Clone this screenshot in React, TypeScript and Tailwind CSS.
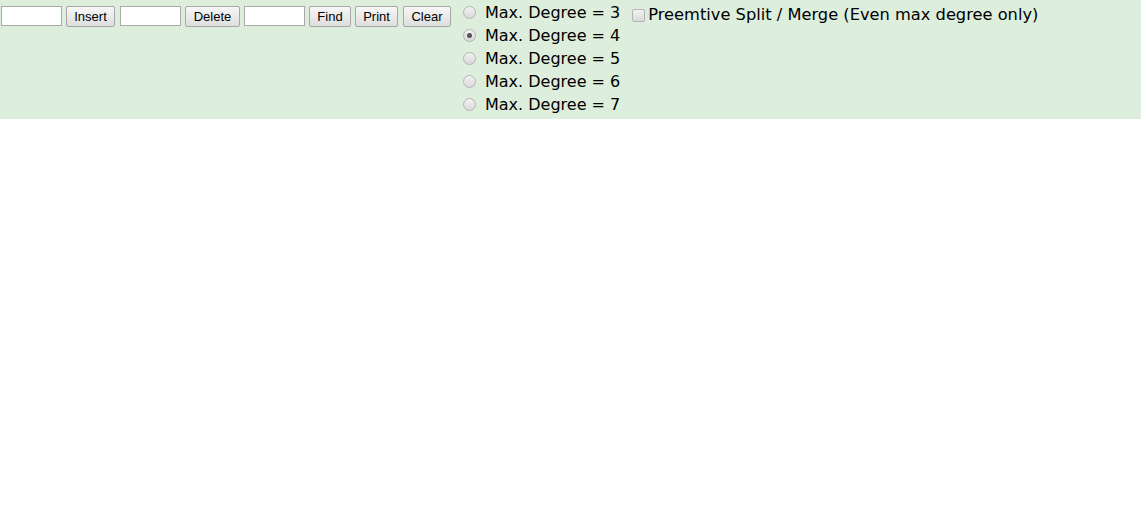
import React from "react";

const btn =
  "h-[21px] px-[4px] text-[13px] leading-none text-black border border-[#a7a7a7] rounded-[2px] bg-gradient-to-b from-[#f7f7f7] to-[#dedede] font-['Liberation_Sans',Arial,sans-serif]";
const inp = "h-[20px] w-[61px] bg-white border border-[#a9a9a9] outline-none";

function Radio({ checked }: { checked?: boolean }) {
  return (
    <span className="w-[13px] h-[13px] rounded-full border border-[#b4b4b4] bg-gradient-to-b from-[#f2f2f2] to-[#d9d9d9] flex items-center justify-center">
      {checked && <span className="w-[5px] h-[5px] rounded-full bg-[#555]" />}
    </span>
  );
}

export default function App() {
  const degrees = [3, 4, 5, 6, 7];
  return (
    <div className="w-[1141px] h-[509px] bg-white">
      <div className="h-[119px] bg-[#ddeedd] flex items-start">
        <div className="flex items-start pt-[6px] pl-[1px] gap-[4px]">
          <input className={inp} />
          <button className={btn + " w-[49px]"}>Insert</button>
          <input className={inp + " ml-[1px]"} />
          <button className={btn + " w-[55px]"}>Delete</button>
          <input className={inp} />
          <button className={btn + " w-[42px]"}>Find</button>
          <button className={btn + " w-[43px]"}>Print</button>
          <button className={btn + " w-[48px] ml-[1px]"}>Clear</button>
        </div>
        <div className="flex flex-col ml-[12px] pt-[1px] font-['DejaVu_Sans',Verdana,sans-serif] text-[16px] text-black">
          {degrees.map((d) => (
            <div key={d} className="h-[23px] flex items-center">
              <Radio checked={d === 4} />
              <span className="ml-[9px] leading-none">Max. Degree = {d}</span>
            </div>
          ))}
        </div>
        <div className="flex items-center ml-[12px] pt-[4px] font-['DejaVu_Sans',Verdana,sans-serif] text-[16.25px] text-black">
          <span className="w-[13px] h-[13px] rounded-[2px] border border-[#b4b4b4] bg-gradient-to-b from-[#f2f2f2] to-[#d9d9d9]" />
          <span className="ml-[3px] leading-[22px]">Preemtive Split / Merge (Even max degree only)</span>
        </div>
      </div>
    </div>
  );
}
